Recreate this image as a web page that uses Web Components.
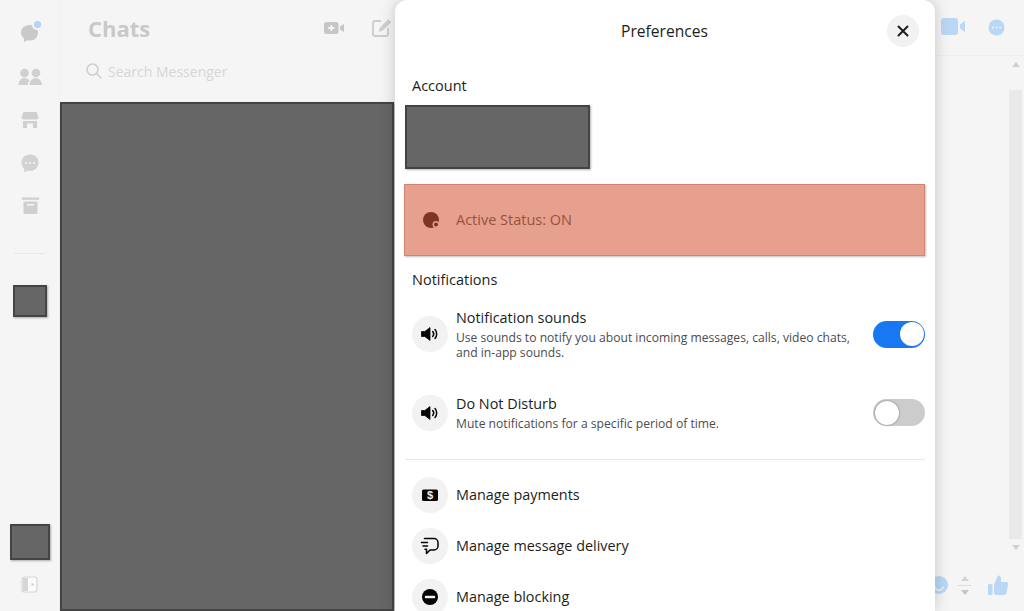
<!DOCTYPE html>
<html lang="en">
<head>
<meta charset="utf-8">
<title>Preferences</title>
<style>
  html, body { margin: 0; height: 100%; overflow: hidden; background: #f5f5f5; }
  body { font-family: "Open Sans", "Noto Sans", sans-serif; }
</style>
</head>
<body>
<messenger-app></messenger-app>

<script>
const icons = {
  sound: '<svg width="20" height="20" viewBox="0 0 20 20"><path fill="#050505" d="M1.500 7.500h3.300L10 3.600v12.800l-5.200-3.900H1.500z" stroke="#050505" stroke-width=".8" stroke-linejoin="round"/><path fill="none" stroke="#050505" stroke-width="1.500" stroke-linecap="round" d="M12.700 7.600a3.600 3.600 0 0 1 0 4.800M15 5.600a6.600 6.600 0 0 1 0 8.800"/></svg>',
  payments: '<svg width="20" height="20" viewBox="0 0 20 20"><rect x="2" y="4.500" width="16" height="11.500" rx="1.600" fill="#050505"/><text x="10" y="14.200" text-anchor="middle" font-family="Liberation Sans" font-weight="700" font-size="11" fill="#f2f2f2">$</text></svg>',
  delivery: '<svg width="20" height="20" viewBox="0 0 20 20" fill="none" stroke="#050505" stroke-width="1.500" stroke-linecap="round" stroke-linejoin="round"><path d="M4.500 2.500h9.500a4 4 0 0 1 4 4v3.500a4 4 0 0 1-4 4H10l-3.500 3.500V14"/><path d="M1.500 6.500h6M3 10h4.500M5 13.200h1.500"/></svg>',
  block: '<svg width="20" height="20" viewBox="0 0 20 20"><circle cx="10" cy="10" r="8" fill="#050505"/><rect x="4.800" y="8.700" width="10.400" height="2.600" rx="1" fill="#f2f2f2"/></svg>'
}

customElements.define('redacted-box', class extends HTMLElement {
  constructor () {
    super()
    this.attachShadow({ mode: 'open' }).innerHTML = `
      <style>
        :host {
          display: block;
          box-sizing: border-box;
          background: #666;
          border: 2px solid #444;
          box-shadow: 1px 1px 2px rgba(0, 0, 0, .3);
        }
      </style>`
  }
})

customElements.define('app-rail', class extends HTMLElement {
  constructor () {
    super()
    this.attachShadow({ mode: 'open' }).innerHTML = `
      <style>
        :host {
          display: flex;
          flex-direction: column;
          align-items: center;
          box-sizing: border-box;
          width: 60px;
          height: 611px;
          padding: 18px 0 17px;
          background: #f5f5f5;
          border-right: 1px dotted #ececec;
        }
        .ico { display: block; width: 28px; height: 28px; margin-bottom: 15px; }
        .ico:first-of-type { margin-bottom: 17px; }
        hr { width: 30px; border: 0; border-top: 1px dotted #dcdcdc; margin: 18px 0 31px; }
        .spacer { flex: 1; }
        .me { width: 34px; height: 32px; }
        .you { width: 40px; height: 36px; margin-bottom: 16px; }
        .toggle { display: block; }
      </style>
      <svg class="ico" viewBox="0 0 28 28">
        <path fill="#c9c9c9" d="M14 7c-5 0-9 3-9 7.500 0 2.500 1.200 4.500 3 5.900V24l3.400-1.800c.8.200 1.700.3 2.600.3 5 0 8-3.500 8-8S19 7 14 7z"/>
        <circle cx="21" cy="7" r="5" fill="#f5f5f5"/><circle cx="21.500" cy="6.500" r="3.600" fill="#b3d4f5"/>
      </svg>
      <svg class="ico" viewBox="0 0 28 28" fill="#d0d0d0">
        <circle cx="8.500" cy="10" r="4.300"/><circle cx="20" cy="10" r="4.300"/>
        <path d="M2.500 22c0-4 2.800-7 6-7 2 0 3.700.9 5 2.400-1 1.300-1.600 2.900-1.700 4.600H2.500zM13.500 22c0-4 3-7 6.300-7s6.200 3 6.200 7H13.500z"/>
      </svg>
      <svg class="ico" viewBox="0 0 28 28" fill="#d0d0d0">
        <path d="M7.500 6h13l2 5a2.500 2.500 0 0 1-2.500 2.500H8A2.500 2.500 0 0 1 5.500 11l2-5z"/>
        <path d="M7 15h14v7h-4v-4.500h-6V22H7z"/>
      </svg>
      <svg class="ico" viewBox="0 0 28 28">
        <path fill="#d2d2d2" d="M14 5.500c-5 0-8.500 3.600-8.500 8 0 2.500 1.100 4.700 2.800 6.200v3.800l3.500-1.900c.7.200 1.400.3 2.200.3 5 0 8.500-3.700 8.500-8.400S19 5.500 14 5.500z"/>
        <g fill="#f5f5f5"><circle cx="10" cy="14" r="1.100"/><circle cx="14" cy="14" r="1.100"/><circle cx="18" cy="14" r="1.100"/></g>
      </svg>
      <svg class="ico" viewBox="0 0 28 28" fill="#d0d0d0">
        <rect x="6" y="5.500" width="17" height="2.300"/>
        <path d="M7.500 9.500h14v11a1.500 1.500 0 0 1-1.500 1.500H9a1.500 1.500 0 0 1-1.500-1.500v-11z"/>
        <rect x="11" y="12" width="7" height="1.600" fill="#f5f5f5"/>
      </svg>
      <hr>
      <redacted-box class="me"></redacted-box>
      <div class="spacer"></div>
      <redacted-box class="you"></redacted-box>
      <svg class="toggle" width="18" height="18" viewBox="0 0 18 18">
        <rect x="1" y="1" width="15" height="15" rx="2.500" fill="#fafafa" stroke="#d6d6d6" stroke-width="1.200"/>
        <path d="M2 2h5v13H2z" fill="#d6d6d6"/><path d="M10.500 6.500l3 2-3 2z" fill="#d6d6d6"/>
      </svg>`
  }
})

customElements.define('chat-sidebar', class extends HTMLElement {
  constructor () {
    super()
    this.attachShadow({ mode: 'open' }).innerHTML = `
      <style>
        :host {
          display: flex;
          flex-direction: column;
          box-sizing: border-box;
          width: 335px;
          height: 611px;
          background: #f5f5f5;
        }
        header {
          display: flex;
          align-items: center;
          height: 56px;
          padding: 0 3px 0 28px;
          gap: 26px;
        }
        h1 {
          flex: 1;
          margin: 0;
          font: 700 22px/1 "Open Sans", sans-serif;
          color: #c9c9c9;
        }
        .search {
          display: flex;
          align-items: center;
          gap: 5px;
          height: 30px;
          padding-left: 25px;
          font-size: 14px;
          color: #d6d6d6;
        }
        redacted-box { flex: 1; margin-top: 16px; width: 334px; }
      </style>
      <header>
        <h1>Chats</h1>
        <svg width="20" height="14" viewBox="0 0 20 14">
          <rect x="0" y="1" width="14.500" height="12" rx="2.500" fill="#c6c6c6"/>
          <path d="M16 5.500l4-2.500v8l-4-2.500z" fill="#c6c6c6"/>
          <path d="M7.300 4v6M4.300 7h6" stroke="#f5f5f5" stroke-width="1.800"/>
        </svg>
        <svg width="22" height="22" viewBox="0 0 22 22" fill="none" stroke="#cdcdcd" stroke-width="1.800">
          <path d="M11 4H5a2 2 0 0 0-2 2v11a2 2 0 0 0 2 2h11a2 2 0 0 0 2-2v-6"/>
          <path d="M19 3l-8.500 8.500-.5 2 2-.5L20.500 4.500"/>
        </svg>
      </header>
      <div class="search">
        <svg width="18" height="18" viewBox="0 0 18 18" fill="none" stroke="#cfcfcf" stroke-width="1.600">
          <circle cx="7.500" cy="7.500" r="5.500"/><path d="M11.500 11.500l5 5"/>
        </svg>
        <span>Search Messenger</span>
      </div>
      <redacted-box></redacted-box>`
  }
})

customElements.define('chat-main', class extends HTMLElement {
  constructor () {
    super()
    this.attachShadow({ mode: 'open' }).innerHTML = `
      <style>
        :host {
          display: flex;
          flex-direction: column;
          flex: 1;
          height: 611px;
          background: #f5f5f5;
        }
        header {
          display: flex;
          align-items: center;
          justify-content: flex-end;
          gap: 23px;
          box-sizing: border-box;
          height: 56px;
          padding: 0 19px 1px 0;
          border-bottom: 1px dotted #e6e6e6;
        }
        .body { flex: 1; display: flex; justify-content: flex-end; }
        .scroll {
          display: flex;
          flex-direction: column;
          align-items: center;
          width: 15px;
          margin-right: 1px;
        }
        .up, .down { width: 0; height: 0; border: 4px solid transparent; }
        .up { border-bottom: 5px solid #d0d0d0; border-top: 0; margin: 6px 0 23px; }
        .down { border-top: 5px solid #d0d0d0; border-bottom: 0; margin: 6px 0 0; }
        .thumb { width: 13px; height: 449px; background: #e9e9e9; }
        footer {
          display: flex;
          align-items: center;
          justify-content: flex-end;
          box-sizing: border-box;
          height: 56px;
          padding: 4px 15px 0 0;
        }
        footer > .emoji { margin-right: 9px; }
        .step { display: flex; flex-direction: column; align-items: center; gap: 4px; margin-right: 16px; }
        .step i { display: block; width: 0; height: 0; border: 4px solid transparent; }
        .step i:first-child { border-bottom: 5px solid #d4d4d4; border-top: 0; }
        .step i:last-child { border-top: 5px solid #c6c6c6; border-bottom: 0; }
        .step b { display: block; width: 13px; border-top: 1px solid #dcdcdc; }
      </style>
      <header>
        <svg width="24" height="18" viewBox="0 0 24 18">
          <rect x="0" y="0" width="17" height="17" rx="3" fill="#bad8f5"/>
          <path d="M19 6.500l5-3.500v11l-5-3.500z" fill="#bad8f5"/>
        </svg>
        <svg width="17" height="17" viewBox="0 0 18 18">
          <circle cx="9" cy="9" r="8.500" fill="#bad8f5"/>
          <g fill="#eef5fc"><circle cx="5.200" cy="9" r="1"/><circle cx="9" cy="9" r="1"/><circle cx="12.800" cy="9" r="1"/></g>
        </svg>
      </header>
      <div class="body">
        <div class="scroll"><i class="up"></i><div class="thumb"></div><i class="down"></i></div>
      </div>
      <footer>
        <svg class="emoji" width="20" height="20" viewBox="0 0 20 20">
          <circle cx="10" cy="10" r="9" fill="#bad8f5"/>
          <path d="M5.500 11.500c1 2.500 2.700 3.700 4.500 3.700s3.500-1.200 4.500-3.700" fill="none" stroke="#eef5fc" stroke-width="1.500"/>
        </svg>
        <div class="step"><i></i><b></b><i></i></div>
        <svg width="22" height="22" viewBox="0 0 22 22" fill="#bad8f5">
          <rect x="1" y="10" width="4.500" height="11" rx="1.500"/>
          <path d="M7 10.500l4-9c1.800 0 3 1.300 3 3V8h5a2 2 0 0 1 2 2.400l-1.600 8.600a2.500 2.500 0 0 1-2.400 2H9a2 2 0 0 1-2-2v-8.500z"/>
        </svg>
      </footer>`
  }
})

customElements.define('toggle-switch', class extends HTMLElement {
  constructor () {
    super()
    this.attachShadow({ mode: 'open' }).innerHTML = `
      <style>
        :host {
          display: flex;
          align-items: center;
          justify-content: flex-start;
          flex: none;
          box-sizing: border-box;
          width: 52px;
          height: 27px;
          padding: 1.500px;
          border-radius: 14px;
          background: #ccc;
        }
        :host([on]) { background: #1877f2; justify-content: flex-end; }
        i {
          display: block;
          width: 24px;
          height: 24px;
          border-radius: 50%;
          background: #fff;
          box-shadow: 0 0 2px rgba(0, 0, 0, .5);
        }
        :host([on]) i { box-shadow: none; }
      </style>
      <i></i>`
  }
})

customElements.define('pref-row', class extends HTMLElement {
  constructor () {
    super()
    this.attachShadow({ mode: 'open' })
  }

  connectedCallback () {
    this.render()
  }

  render () {
    this.shadowRoot.innerHTML = `
      <style>
        :host {
          display: flex;
          align-items: center;
          gap: 8px;
          box-sizing: border-box;
          padding-left: 8px;
        }
        .circle {
          display: flex;
          align-items: center;
          justify-content: center;
          flex: none;
          width: 36px;
          height: 36px;
          border-radius: 50%;
          background: #f2f2f2;
        }
        .text { flex: 1; min-width: 0; }
        .label { font-size: 14.400px; line-height: 20px; color: #1c1e21; }
        .desc { margin-top: 2px; font-size: 12.130px; line-height: 15px; color: #4b4c4f; }
        :host(:not([desc])) .desc { display: none; }
      </style>
      <div class="circle">${icons[this.getAttribute('icon')]}</div>
      <div class="text">
        <div class="label">${this.getAttribute('label')}</div>
        <div class="desc"><slot></slot></div>
      </div>
      <slot name="end"></slot>`
  }
})

customElements.define('pref-dialog', class extends HTMLElement {
  constructor () {
    super()
    this.attachShadow({ mode: 'open' }).innerHTML = `
      <style>
        :host {
          position: absolute;
          left: 395px;
          top: 0;
          width: 540px;
          height: 611px;
          box-sizing: border-box;
          padding: 0 10px 0 9px;
          overflow: hidden;
          color: #1c1e21;
          background: #fff;
          border-radius: 12px 12px 0 0;
          box-shadow: 0 0 16px rgba(0, 0, 0, .2);
        }
        header {
          display: flex;
          align-items: center;
          justify-content: center;
          position: relative;
          height: 62px;
          font-size: 15.600px;
          font-weight: 500;
        }
        .close {
          position: absolute;
          right: 6px;
          top: 15px;
          display: flex;
          align-items: center;
          justify-content: center;
          width: 32px;
          height: 32px;
          border-radius: 50%;
          background: #f2f2f2;
        }
        h2 { margin: 0; font-size: 14.500px; line-height: 20px; font-weight: 500; padding-left: 8px; }
        .account { margin-top: 14px; }
        .acct-box { width: 185px; height: 64px; margin: 9px 0 0 1px; }
        .status {
          display: flex;
          align-items: center;
          gap: 16px;
          box-sizing: border-box;
          height: 72px;
          margin-top: 15px;
          padding-left: 17px;
          background: #e8a08e;
          border: 1px solid #cf8575;
          box-shadow: 1px 1px 2px rgba(0, 0, 0, .25);
          font-size: 14.500px;
          color: #96523f;
        }
        .status svg { margin-top: -1px; }
        .status span { margin-top: -2px; }
        .notif { margin-top: 14px; }
        .first { margin-top: 18px; }
        .second { margin-top: 34px; }
        hr { border: 0; border-top: 1px solid #e9e9e9; margin: 28px 0 17px 1px; }
        .manage { display: flex; flex-direction: column; gap: 15px; }
      </style>
      <header>
        <span>Preferences</span>
        <div class="close">
          <svg width="14" height="14" viewBox="0 0 14 14" stroke="#1c1e21" stroke-width="2" stroke-linecap="round">
            <path d="M2.500 2.500l9 9M11.500 2.500l-9 9"/>
          </svg>
        </div>
      </header>
      <h2 class="account">Account</h2>
      <redacted-box class="acct-box"></redacted-box>
      <div class="status">
        <svg width="18" height="18" viewBox="0 0 18 18">
          <circle cx="9" cy="9" r="8" fill="#7f3522"/>
          <circle cx="14" cy="13.500" r="3.500" fill="#e8a08e"/>
          <circle cx="14" cy="13.500" r="2" fill="#7f3522"/>
        </svg>
        <span>Active Status: ON</span>
      </div>
      <h2 class="notif">Notifications</h2>
      <pref-row class="first" desc icon="sound" label="Notification sounds">
        Use sounds to notify you about incoming messages, calls, video chats,<br>and in-app sounds.
        <toggle-switch slot="end" on></toggle-switch>
      </pref-row>
      <pref-row class="second" desc icon="sound" label="Do Not Disturb">
        Mute notifications for a specific period of time.
        <toggle-switch slot="end"></toggle-switch>
      </pref-row>
      <hr>
      <div class="manage">
        <pref-row icon="payments" label="Manage payments"></pref-row>
        <pref-row icon="delivery" label="Manage message delivery"></pref-row>
        <pref-row icon="block" label="Manage blocking"></pref-row>
      </div>`
  }
})

customElements.define('messenger-app', class extends HTMLElement {
  constructor () {
    super()
    this.attachShadow({ mode: 'open' }).innerHTML = `
      <style>
        :host { display: flex; position: relative; width: 1024px; height: 611px; overflow: hidden; }
      </style>
      <app-rail></app-rail>
      <chat-sidebar></chat-sidebar>
      <chat-main></chat-main>
      <pref-dialog></pref-dialog>`
  }
})
</script>
</body>
</html>
